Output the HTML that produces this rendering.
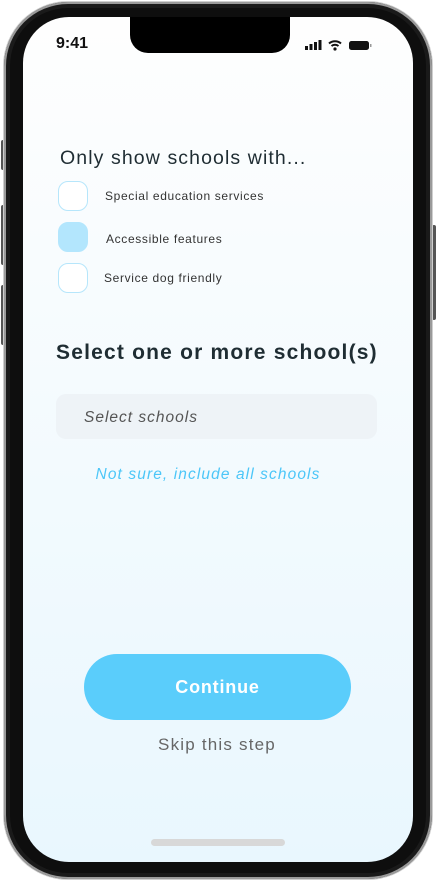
<!DOCTYPE html>
<html><head><style>
*{margin:0;padding:0;box-sizing:border-box}
body{width:437px;height:881px;background:#fff;position:relative;overflow:hidden;font-family:"Liberation Sans",sans-serif}
.frame{position:absolute;left:4px;top:2px;width:428px;height:877px;border-radius:64px;background:#1a1a1a;box-shadow:0 0 0 2px #9a9a9a inset,0 0 0 1px #cfcfcf}
.frame2{position:absolute;left:10px;top:8px;width:416px;height:865px;border-radius:58px;background:#0e0e0e}
.screen{position:absolute;left:23px;top:17px;width:390px;height:845px;border-radius:46px;background:linear-gradient(#fefefe,#e9f7fe);overflow:hidden}
.notch{position:absolute;left:107px;top:0;width:160px;height:36px;background:#000;border-radius:0 0 18px 18px}
.btn{position:absolute;background:#555;width:4px;border-radius:2px}
.t{position:absolute;color:#1f2d33;white-space:nowrap}
.cb{position:absolute;left:35px;width:30px;height:30px;border-radius:10px;border:1.5px solid #b6e6fb;background:#fff}
.lb{font-size:12px;color:#333;letter-spacing:0.65px}
</style></head><body>
<div class="btn" style="left:1px;top:140px;height:30px"></div>
<div class="btn" style="left:1px;top:205px;height:60px"></div>
<div class="btn" style="left:1px;top:285px;height:60px"></div>
<div class="btn" style="left:432px;top:225px;height:95px"></div>
<div class="frame"></div><div class="frame2"></div>
<div class="screen">
<div class="notch"></div>
<div class="t" style="left:33px;top:18px;font-size:16px;font-weight:bold;color:#111">9:41</div>
<svg style="position:absolute;left:282px;top:22px" width="72" height="12" viewBox="0 0 72 12"><rect x="0" y="7" width="3" height="4" fill="#111"/><rect x="4.5" y="5" width="3" height="6" fill="#111"/><rect x="9" y="3" width="3" height="8" fill="#111"/><rect x="13.5" y="1" width="3" height="10" fill="#111"/><path d="M24 4.5a9 9 0 0 1 12 0M26.5 7a5.5 5.5 0 0 1 7 0" stroke="#111" stroke-width="2" fill="none"/><circle cx="30" cy="10" r="1.6" fill="#111"/><rect x="44" y="2" width="20" height="9" rx="2.5" fill="#111"/><rect x="65" y="5" width="1.5" height="3" fill="#999"/></svg>
<div class="t" style="left:37px;top:130px;font-size:19.5px;letter-spacing:1.1px">Only show schools with...</div>
<div class="cb" style="top:164px"></div>
<div class="cb" style="top:205px;background:#b3e6fd;border-color:#b3e6fd"></div>
<div class="cb" style="top:246px"></div>
<div class="t lb" style="left:82px;top:172px">Special education services</div>
<div class="t lb" style="left:83px;top:215px">Accessible features</div>
<div class="t lb" style="left:81px;top:254px">Service dog friendly</div>
<div class="t" style="left:33px;top:324px;font-size:21px;font-weight:bold;letter-spacing:1.2px">Select one or more school(s)</div>
<div style="position:absolute;left:33px;top:377px;width:321px;height:45px;border-radius:10px;background:#eef3f7"></div>
<div class="t" style="left:61px;top:392px;font-size:15.5px;font-style:italic;color:#555;letter-spacing:1px">Select schools</div>
<div class="t" style="left:0;width:370px;text-align:center;top:449px;font-size:15.5px;font-style:italic;color:#4cc6f8;letter-spacing:1.1px">Not sure, include all schools</div>
<div style="position:absolute;left:61px;top:637px;width:267px;height:66px;border-radius:33px;background:#5acdfb;color:#fff;font-weight:bold;font-size:18px;text-align:center;line-height:66px;letter-spacing:0.8px">Continue</div>
<div class="t" style="left:0;width:388px;text-align:center;top:718px;font-size:17px;color:#666;letter-spacing:1.2px">Skip this step</div>
<div style="position:absolute;left:128px;top:822px;width:134px;height:7px;border-radius:4px;background:#d8d8d8"></div>
</div>
</body></html>
